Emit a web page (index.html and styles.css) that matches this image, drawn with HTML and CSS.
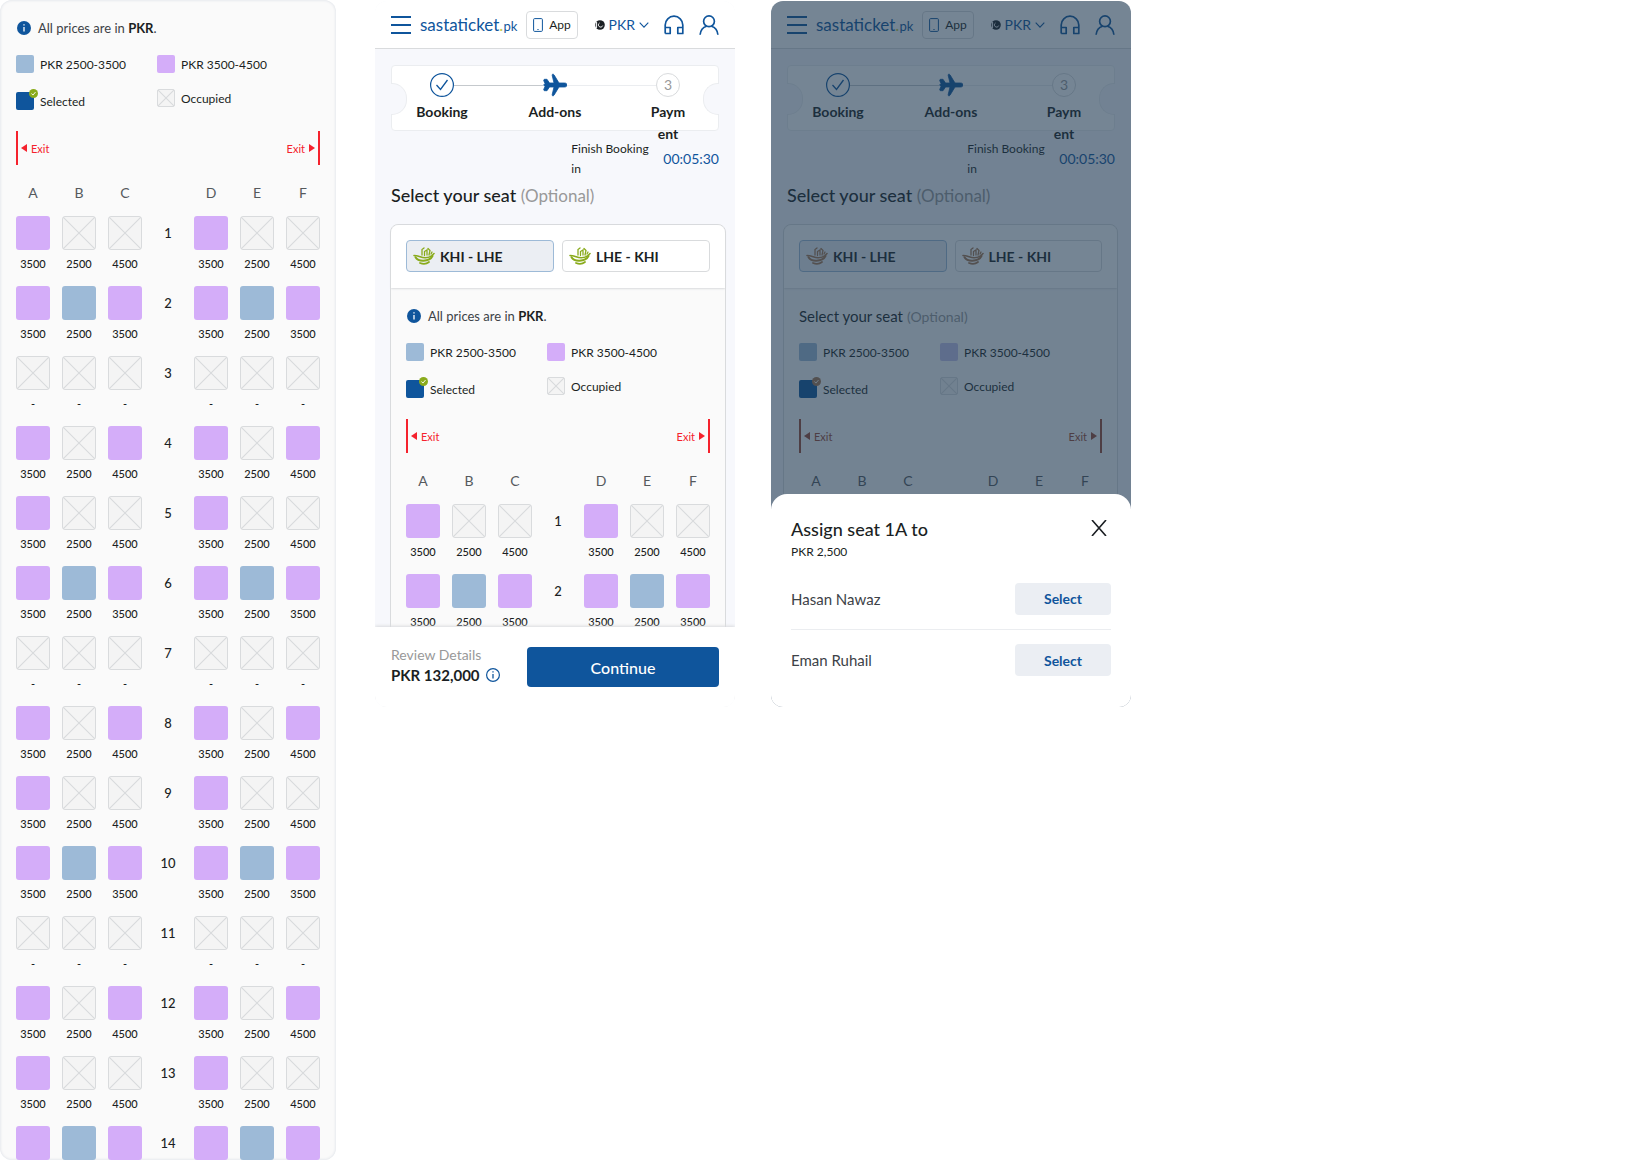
FILE: index.html
```html
<!DOCTYPE html>
<html lang="en">
<head>
  <meta charset="UTF-8">
  <meta name="viewport" content="width=device-width, initial-scale=1.0">
  <title>Seat Selection - sastaticket.pk</title>
  <link rel="stylesheet" href="styles.css">
</head>
<body>
  <!-- shared icons -->
  <svg class="sprite" aria-hidden="true">
    <symbol id="i-menu" viewBox="0 0 20 20"><path d="M0 2h20M0 10h20M0 18h20" fill="none" stroke="#0f559c" stroke-width="1.8"/></symbol>
    <symbol id="i-mobile" viewBox="0 0 10 14"><rect x=".6" y=".6" width="8.8" height="12.8" rx="1" fill="none" stroke="#0f559c"/><path d="M4.4 11.5h1.2" stroke="#0f559c"/></symbol>
    <symbol id="i-flag" viewBox="0 0 10 10"><circle cx="5" cy="5" r="4.8" fill="#1b1f23"/><path d="M1.5 1.8v6.4" stroke="#e8eaec" stroke-width="1.2"/><path d="M4.5 3a2.2 2.2 0 1 0 3.2 2.6" fill="none" stroke="#fff"/></symbol>
    <symbol id="i-chevron" viewBox="0 0 10 6"><path d="M.7.7 5 5.2 9.3.7" fill="none" stroke="#0f559c" stroke-width="1.1"/></symbol>
    <symbol id="i-support" viewBox="0 0 20 20"><path d="M1.2 18.5V10a8.800 8.800 0 0 1 17.600 0v8.500h-5v-6h5M1.200 12.500h5v6h-5" fill="none" stroke="#0f559c" stroke-width="1.7" stroke-linejoin="round"/></symbol>
    <symbol id="i-user" viewBox="0 0 20 20"><circle cx="10" cy="6.300" r="5.400" fill="none" stroke="#0f559c" stroke-width="1.700"/><path d="M1.100 19.800c.4-4.800 3-7.600 6.500-8.600M18.900 19.800c-.4-4.800-3-7.600-6.500-8.600" fill="none" stroke="#0f559c" stroke-width="1.700"/></symbol>
    <symbol id="i-step-done" viewBox="0 0 24 24"><circle cx="12" cy="12" r="11.400" fill="none" stroke="#0f559c" stroke-width="1.200"/><path d="m6.500 12 4 4.500L17.500 7" fill="none" stroke="#0f559c" stroke-width="1.300"/></symbol>
    <symbol id="i-plane" viewBox="0 0 24 24"><path d="M24 12c0-1.200-1-2-2.500-2H16L11 1.800C10.300.8 8.800 1 9.200 2.500L11 10H6.500L4 6.300H2C.8 6.300.6 7 .8 7.800L2 10.500 .6 12 2 13.500.8 16.200c-.2.800 0 1.500 1.200 1.500h2L6.500 14H11L9.200 21.500c-.4 1.500 1.100 1.700 1.800.7L16 14h5.500c1.500 0 2.500-.8 2.500-2z" fill="#0f559c" stroke="#0f559c" stroke-width=".8"/></symbol>
    <symbol id="i-info" viewBox="0 0 14 14"><circle cx="7" cy="7" r="7" fill="#0f559c"/><path d="M7 6v4.500M7 3.200v1.400" stroke="#fff" stroke-width="1.300"/></symbol>
    <symbol id="i-info-line" viewBox="0 0 14 14"><circle cx="7" cy="7" r="6.400" fill="none" stroke="#0f559c" stroke-width="1.200"/><path d="M7 6v4.500M7 3.200v1.400" stroke="#0f559c" stroke-width="1.300"/></symbol>
    <symbol id="i-badge" viewBox="0 0 8 8"><circle cx="4" cy="4" r="4" fill="currentColor"/><path d="m2.200 4 1.300 1.400 2.300-2.700" fill="none" stroke="#fff" stroke-width=".8"/></symbol>
    <symbol id="i-airline" viewBox="0 0 22 18">
      <g fill="none" stroke="currentColor" stroke-linecap="round">
        <path d="M1 8.500c2 .2 3 .3 4.500.7 2.500.8 4 1.800 7 1.600 2.500-.1 5-1 6.500-2.300l2-2" stroke-width="1.600"/>
        <path d="M2.500 10.200c1.500 2.600 4.500 3.600 8 3.500 4-.1 7.500-1.700 9-4.700" stroke-width="2"/>
        <path d="M7 16c3 1.200 6.500 1 9-1" stroke-width="1.800"/>
        <path d="M9 8V2.500L11 1M11.500 8.500V4.500l2.500-1.500V8M16 8l1-4.500-2-2M18 7l1-2" stroke-width="1.300"/>
      </g>
    </symbol>
    <symbol id="i-arrow" viewBox="0 0 6 8"><path d="M6 0v8L0 4z" fill="currentColor"/></symbol>
    <symbol id="i-close" viewBox="0 0 16 16"><path d="m1 0 14 16M15 0 1 16" fill="none" stroke="#1b1f23" stroke-width="1.600"/></symbol>
  </svg>

  <main class="board">

    <!-- full seat map -->
    <section class="seat-sheet">
      <div class="seat-panel">
        <p class="note"><svg class="icon-14"><use href="#i-info"/></svg><span>All prices are in <b>PKR</b>.</span></p>
        <ul class="legend">
          <li><i class="swatch low"></i>PKR 2500-3500</li>
          <li><i class="swatch high"></i>PKR 3500-4500</li>
          <li class="legend-selected"><i class="swatch selected"><svg class="badge"><use href="#i-badge"/></svg></i>Selected</li>
          <li><i class="swatch occupied"></i>Occupied</li>
        </ul>
        <div class="exits">
          <span class="exit"><svg class="arrow"><use href="#i-arrow"/></svg>Exit</span>
          <span class="exit exit-right">Exit<svg class="arrow"><use href="#i-arrow"/></svg></span>
        </div>
        <div class="seat-map seat-map-cut" data-rows="14"></div>
      </div>
    </section>

    <!-- select seat -->
    <section class="phone">
      <header class="topbar">
        <button class="icon-button" aria-label="Menu"><svg class="icon-20"><use href="#i-menu"/></svg></button>
        <a class="brand" href="#">sastaticket<span class="dot">.</span><small>pk</small></a>
        <button class="app-button"><svg class="icon-mobile"><use href="#i-mobile"/></svg>App</button>
        <button class="currency"><svg class="icon-10"><use href="#i-flag"/></svg>PKR<svg class="chevron"><use href="#i-chevron"/></svg></button>
        <button class="icon-button" aria-label="Support"><svg class="icon-20"><use href="#i-support"/></svg></button>
        <button class="icon-button" aria-label="Account"><svg class="icon-20"><use href="#i-user"/></svg></button>
      </header>
      <div class="content">
        <div class="ticket">
          <div class="step"><svg class="step-icon"><use href="#i-step-done"/></svg><span>Booking</span></div>
          <div class="step-line done"></div>
          <div class="step"><svg class="step-icon"><use href="#i-plane"/></svg><span>Add-ons</span></div>
          <div class="step-line"></div>
          <div class="step"><b class="step-icon step-number">3</b><span>Paym<br>ent</span></div>
        </div>
        <div class="timer"><span class="timer-label">Finish Booking in</span><time>00:05:30</time></div>
        <h2 class="title">Select your seat <span>(Optional)</span></h2>
        <div class="seat-card">
          <div class="tabs">
            <button class="tab active"><svg class="airline"><use href="#i-airline"/></svg>KHI - LHE</button>
            <button class="tab"><svg class="airline"><use href="#i-airline"/></svg>LHE - KHI</button>
          </div>
          <div class="seat-panel">
            <p class="note"><svg class="icon-14"><use href="#i-info"/></svg><span>All prices are in <b>PKR</b>.</span></p>
            <ul class="legend">
              <li><i class="swatch low"></i>PKR 2500-3500</li>
              <li><i class="swatch high"></i>PKR 3500-4500</li>
              <li class="legend-selected"><i class="swatch selected"><svg class="badge"><use href="#i-badge"/></svg></i>Selected</li>
              <li><i class="swatch occupied"></i>Occupied</li>
            </ul>
            <div class="exits">
              <span class="exit"><svg class="arrow"><use href="#i-arrow"/></svg>Exit</span>
              <span class="exit exit-right">Exit<svg class="arrow"><use href="#i-arrow"/></svg></span>
            </div>
            <div class="seat-map" data-rows="2"></div>
          </div>
        </div>
      </div>
      <footer class="checkout">
        <div>
          <div class="review">Review Details</div>
          <div class="total">PKR 132,000 <svg class="icon-14"><use href="#i-info-line"/></svg></div>
        </div>
        <button class="continue">Continue</button>
      </footer>
    </section>

    <!-- assign seat -->
    <section class="phone dimmed">
      <header class="topbar">
        <button class="icon-button" aria-label="Menu"><svg class="icon-20"><use href="#i-menu"/></svg></button>
        <a class="brand" href="#">sastaticket<span class="dot">.</span><small>pk</small></a>
        <button class="app-button"><svg class="icon-mobile"><use href="#i-mobile"/></svg>App</button>
        <button class="currency"><svg class="icon-10"><use href="#i-flag"/></svg>PKR<svg class="chevron"><use href="#i-chevron"/></svg></button>
        <button class="icon-button" aria-label="Support"><svg class="icon-20"><use href="#i-support"/></svg></button>
        <button class="icon-button" aria-label="Account"><svg class="icon-20"><use href="#i-user"/></svg></button>
      </header>
      <div class="content">
        <div class="ticket">
          <div class="step"><svg class="step-icon"><use href="#i-step-done"/></svg><span>Booking</span></div>
          <div class="step-line done"></div>
          <div class="step"><svg class="step-icon"><use href="#i-plane"/></svg><span>Add-ons</span></div>
          <div class="step-line"></div>
          <div class="step"><b class="step-icon step-number">3</b><span>Paym<br>ent</span></div>
        </div>
        <div class="timer"><span class="timer-label">Finish Booking in</span><time>00:05:30</time></div>
        <h2 class="title">Select your seat <span>(Optional)</span></h2>
        <div class="seat-card">
          <div class="tabs">
            <button class="tab active"><svg class="airline"><use href="#i-airline"/></svg>KHI - LHE</button>
            <button class="tab"><svg class="airline"><use href="#i-airline"/></svg>LHE - KHI</button>
          </div>
          <div class="seat-panel">
            <h3 class="note subtitle">Select your seat <span>(Optional)</span></h3>
            <ul class="legend">
              <li><i class="swatch low"></i>PKR 2500-3500</li>
              <li><i class="swatch high"></i>PKR 3500-4500</li>
              <li class="legend-selected"><i class="swatch selected"><svg class="badge"><use href="#i-badge"/></svg></i>Selected</li>
              <li><i class="swatch occupied"></i>Occupied</li>
            </ul>
            <div class="exits">
              <span class="exit"><svg class="arrow"><use href="#i-arrow"/></svg>Exit</span>
              <span class="exit exit-right">Exit<svg class="arrow"><use href="#i-arrow"/></svg></span>
            </div>
            <div class="seat-map" data-rows="0"></div>
          </div>
        </div>
      </div>
      <div class="backdrop"></div>
      <div class="assign" role="dialog" aria-labelledby="assignTitle">
        <div class="assign-head">
          <div>
            <h2 id="assignTitle">Assign seat 1A to</h2>
            <p>PKR 2,500</p>
          </div>
          <button class="icon-button" aria-label="Close"><svg class="icon-16"><use href="#i-close"/></svg></button>
        </div>
        <div class="passenger"><span>Hasan Nawaz</span><button class="select">Select</button></div>
        <div class="passenger"><span>Eman Ruhail</span><button class="select">Select</button></div>
      </div>
    </section>

  </main>
  <script src="script.js"></script>
</body>
</html>
```
FILE: styles.css
```css
* {
  box-sizing: border-box;
}
body {
  margin: 0;
  background: #fff;
  color: #1b1f23;
  font-family: Lato, "Open Sans", sans-serif;
}
h2, h3, p, ul {
  margin: 0;
  padding: 0;
}
button {
  padding: 0;
  border: none;
  background: none;
  color: inherit;
  font-family: inherit;
  cursor: pointer;
}
svg {
  display: block;
  flex: none;
}
.sprite {
  position: absolute;
  width: 0;
  height: 0;
}
.icon-20 { width: 20px; height: 20px; }
.icon-16 { width: 16px; height: 16px; }
.icon-14 { width: 14px; height: 14px; }
.icon-10 { width: 10px; height: 10px; }

/* three screens side by side, free space on the right */
.board {
  display: grid;
  grid-template-columns: 339fr 360fr 360fr 462fr;
  column-gap: 36px;
  align-items: start;
}

/* seat panel */
.seat-sheet {
  margin-right: 3px;
  border-radius: 12px;
  background: #fafafa;
  box-shadow: inset 0 0 3px #d5dae2;
  overflow: hidden;
}
.seat-panel {
  padding: 18px 16px 0;
}
.note {
  display: flex;
  align-items: center;
  gap: 7px;
  height: 20px;
  padding-left: 1px;
  font-size: 13px;
  color: #3d4247;
}
.note b {
  color: #1b1f23;
}
.legend {
  display: grid;
  grid-template-columns: 141px 1fr;
  row-gap: 16px;
  margin-top: 17px;
  list-style: none;
  font-size: 12px;
}
.legend li {
  display: flex;
  align-items: center;
  gap: 6px;
  height: 18px;
}
.legend .legend-selected {
  height: 24px;
}
.swatch {
  position: relative;
  width: 18px;
  height: 18px;
  border-radius: 2px;
}
.badge {
  position: absolute;
  top: -3px;
  right: -4px;
  width: 9px;
  height: 9px;
  color: #8aab1c;
}
.low {
  background: #9dbad7;
}
.high {
  background: #d4adf9;
}
.selected {
  background: #0f559c;
}
.occupied {
  border: 1px solid #d9dbdd;
  background:
    linear-gradient(45deg, transparent calc(50% - 1px), #d9dbdd 50%, transparent calc(50% + 1px)),
    linear-gradient(-45deg, transparent calc(50% - 1px), #d9dbdd 50%, transparent calc(50% + 1px)),
    #f4f4f4;
}
.exits {
  display: flex;
  justify-content: space-between;
  margin-top: 18px;
}
.exit {
  display: flex;
  align-items: center;
  gap: 4px;
  height: 34px;
  padding: 0 3px;
  border-left: 2px solid;
  color: #f5222d;
  font-size: 11px;
}
.exit-right {
  border-left: none;
  border-right: 2px solid;
}
.arrow {
  width: 6px;
  height: 8px;
}
.exit-right .arrow {
  transform: rotate(180deg);
}
.seat-map {
  margin-top: 18px;
}
.seat-row {
  display: grid;
  grid-template-columns: repeat(3, 34px) 1fr repeat(3, 34px);
  column-gap: 12px;
  height: 70px;
  text-align: center;
}
.seat-map-cut .seat-row:last-child {
  height: 34px;
}
.seat-head {
  height: 32px;
  font-size: 14px;
  line-height: 19px;
  color: #55595d;
}
.seat {
  display: block;
  width: 34px;
  height: 34px;
  border-radius: 3px;
}
.price {
  display: block;
  margin-top: 6px;
  font-size: 11px;
  font-weight: 500;
  line-height: 16px;
}
.row-number {
  font-size: 13px;
  font-weight: 500;
  line-height: 34px;
}

/* phone */
.phone {
  position: relative;
  display: flex;
  flex-direction: column;
  aspect-ratio: 360 / 706;
  min-height: 0;
  margin-top: 1px;
  border-radius: 12px;
  background: #f7f8fc;
  overflow: hidden;
}
.topbar {
  display: flex;
  align-items: center;
  gap: 15px;
  flex: none;
  height: 48px;
  padding: 0 16px;
  border-bottom: 1px solid #d9dbdd;
  background: #fff;
}
.brand {
  margin: 0 -6px;
  color: #0f559c;
  font-size: 17px;
  text-decoration: none;
}
.brand .dot {
  color: #c5c94a;
}
.brand small {
  font-size: 13px;
}
.app-button {
  display: flex;
  align-items: center;
  gap: 6px;
  height: 28px;
  padding: 0 6px;
  border: 1px solid #d9dbdd;
  border-radius: 4px;
  font-size: 12px;
}
.icon-mobile {
  width: 10px;
  height: 14px;
}
.currency {
  display: flex;
  align-items: center;
  gap: 4px;
  margin-left: auto;
  color: #0f559c;
  font-size: 14px;
}
.chevron {
  width: 10px;
  height: 6px;
}
.content {
  flex: 1;
  min-height: 0;
  padding-top: 16px;
  overflow: hidden;
}
.ticket {
  position: relative;
  display: flex;
  justify-content: space-between;
  height: 66px;
  margin: 0 16px;
  padding: 7px 24px 0;
  border: 1px solid #ebedf0;
  border-radius: 4px;
  background: #fff;
}
.ticket::before, .ticket::after {
  content: "";
  position: absolute;
  top: 17px;
  left: -1px;
  width: 15px;
  height: 30px;
  border: 1px solid #ebedf0;
  border-left: none;
  border-radius: 0 15px 15px 0;
  background: #f7f8fc;
}
.ticket::after {
  left: auto;
  right: -1px;
  transform: rotate(180deg);
}
.step {
  display: flex;
  flex-direction: column;
  align-items: center;
  width: 52px;
  font-size: 14px;
  font-weight: bold;
  line-height: 22px;
  text-align: center;
  white-space: nowrap;
}
.step span {
  margin-top: 4px;
}
.step-icon {
  width: 24px;
  height: 24px;
  flex: none;
}
.step-number {
  border: 1px solid #d9dbdd;
  border-radius: 50%;
  color: #999;
  font-weight: normal;
}
.step-line {
  flex: 1;
  height: 1px;
  margin: 12px -14px 0;
  background: #ebedf0;
}
.step-line.done {
  background: #c5c9cd;
}
.timer {
  display: flex;
  align-items: center;
  justify-content: flex-end;
  gap: 12px;
  margin: 8px 16px 0;
  font-size: 12px;
  line-height: 20px;
}
.timer-label {
  width: 80px;
}
.timer time {
  color: #0f559c;
  font-size: 14px;
}
.title {
  margin: 3px 16px 0;
  font-size: 18px;
  font-weight: 500;
  line-height: 26px;
}
.title span, .subtitle span {
  color: #999;
  font-size: 17px;
  font-weight: normal;
}
.seat-card {
  margin: 15px 9px 0 15px;
  border: 1px solid #d9dbdd;
  border-radius: 8px;
  background: #fafafa;
}
.seat-card .seat-panel {
  padding: 18px 15px 0;
}
.tabs {
  display: grid;
  grid-template-columns: 1fr 1fr;
  gap: 8px;
  padding: 15px 15px 16px;
  border-radius: 8px 8px 0 0;
  background: #fff;
  box-shadow: 0 1px 2px #d9dbdd;
}
.tab {
  display: flex;
  align-items: center;
  gap: 5px;
  height: 32px;
  padding: 0 6px;
  border: 1px solid #d9dbdd;
  border-radius: 4px;
  font-size: 14px;
  font-weight: bold;
}
.tab.active {
  border-color: #9dbad7;
  background: #ebeef3;
}
.airline {
  width: 22px;
  height: 18px;
  color: #8aab1c;
}
.subtitle {
  gap: 4px;
  padding-left: 0;
  color: #1b1f23;
  font-size: 15px;
  font-weight: normal;
}
.subtitle span {
  font-size: 14px;
}
.checkout {
  position: relative;
  display: flex;
  align-items: center;
  justify-content: space-between;
  flex: none;
  height: 80px;
  padding: 0 16px;
  background: #fff;
  box-shadow: 0 -1px 3px #d9dbdd;
}
.review {
  color: #999;
  font-size: 14px;
  line-height: 20px;
}
.total {
  display: flex;
  align-items: center;
  gap: 6px;
  padding-bottom: 4px;
  font-size: 15px;
  font-weight: bold;
  line-height: 20px;
}
.continue {
  width: 192px;
  height: 40px;
  border-radius: 4px;
  background: #0f559c;
  color: #fff;
  font-size: 16px;
  font-weight: 500;
}

/* assign seat sheet */
.dimmed .seat-card {
  margin: 15px 13px 0 12px;
}
.dimmed .exit {
  color: #9a4a33;
}
.dimmed .airline, .dimmed .badge {
  color: #a87850;
}
.dimmed .high {
  background: #c4c0ea;
}
.backdrop {
  position: absolute;
  inset: 0;
  background: rgba(29, 55, 80, 0.61);
}
.assign {
  position: absolute;
  left: 0;
  right: 0;
  bottom: 0;
  padding: 22px 20px 17px;
  border-radius: 16px 16px 0 0;
  background: #fff;
}
.assign-head {
  display: flex;
  justify-content: space-between;
  align-items: flex-start;
  padding: 0 4px 6px 0;
}
.assign-head .icon-button {
  margin-top: 4px;
}
.assign h2 {
  font-size: 18px;
  font-weight: 500;
  line-height: 26px;
}
.assign p {
  font-size: 12px;
  line-height: 20px;
}
.passenger {
  display: flex;
  align-items: center;
  justify-content: space-between;
  height: 61px;
  font-size: 15px;
  color: #3d4247;
}
.passenger + .passenger {
  border-top: 1px solid #ebedf0;
}
.select {
  width: 96px;
  height: 32px;
  border-radius: 4px;
  background: #ebeef3;
  color: #0f559c;
  font-size: 14px;
  font-weight: bold;
}
.seat-map .seat-head {
  height: 33px;
}
```
FILE: script.js
```js
// h = 3500-4500 seat, l = 2500-3500 seat, x = occupied
const layouts = [
  { seats: 'hxxhxx', prices: [3500, 2500, 4500] },
  { seats: 'hlhhlh', prices: [3500, 2500, 3500] },
  { seats: 'xxxxxx', prices: ['-', '-', '-'] },
  { seats: 'hxhhxh', prices: [3500, 2500, 4500] }
];
const seatClass = { h: 'high', l: 'low', x: 'occupied' };
const letters = ['A', 'B', 'C', 'D', 'E', 'F'];

function seatRow(row, withPrices) {
  const layout = layouts[(row - 1) % 4];
  const cells = letters.map((letter, i) => {
    const type = layout.seats[i];
    const price = withPrices ? `<span class="price">${layout.prices[i % 3]}</span>` : '';
    return `<div><button class="seat ${seatClass[type]}" aria-label="Seat ${row}${letter}"${type === 'x' ? ' disabled' : ''}></button>${price}</div>`;
  });
  cells.splice(3, 0, `<div class="row-number">${row}</div>`);
  return `<div class="seat-row">${cells.join('')}</div>`;
}

document.querySelectorAll('.seat-map').forEach((map) => {
  const count = Number(map.dataset.rows);
  const isCut = map.classList.contains('seat-map-cut');
  const head = letters.map((letter) => `<div>${letter}</div>`);
  head.splice(3, 0, '<div></div>');
  let html = `<div class="seat-row seat-head">${head.join('')}</div>`;
  for (let row = 1; row <= count; row++) {
    html += seatRow(row, !(isCut && row === count));
  }
  map.innerHTML = html;
});
```
